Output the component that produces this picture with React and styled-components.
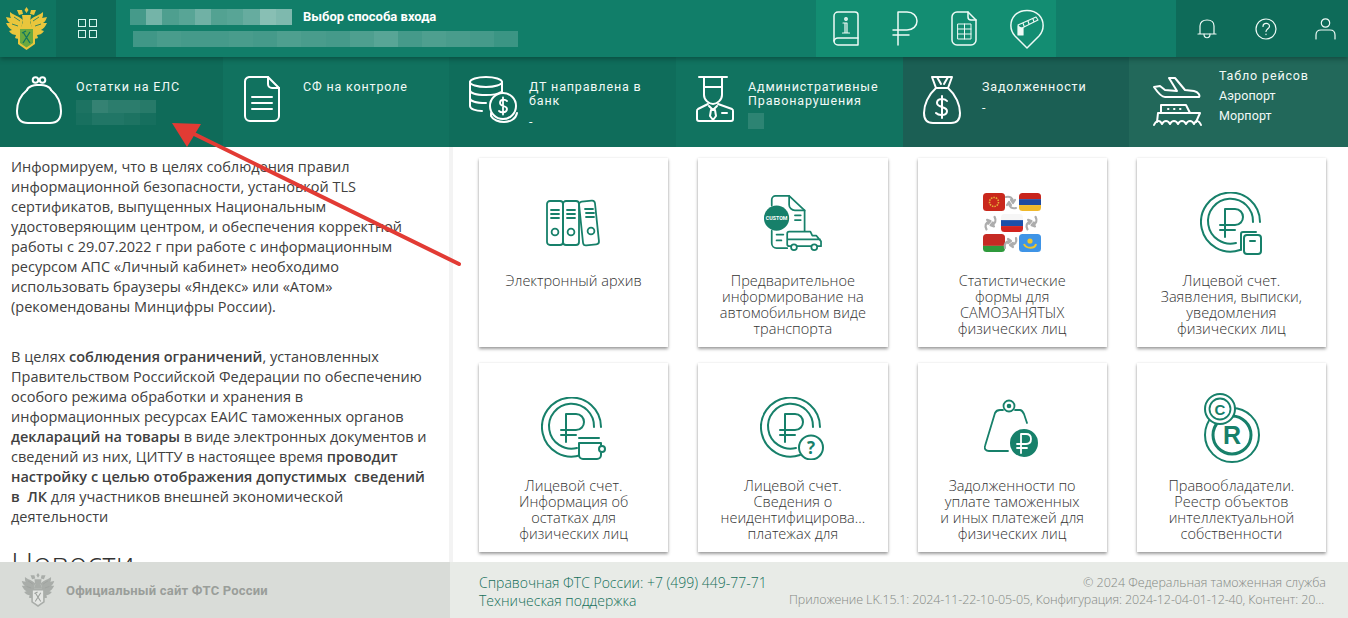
import React from "react";
import styled, { createGlobalStyle } from "styled-components";

const GlobalStyle = createGlobalStyle`
  html, body { margin: 0; padding: 0; height: 100%; overflow: hidden; background: #fff; }
  body { font-family: "Open Sans", "Liberation Sans", sans-serif; color: #444; }
  * { box-sizing: border-box; }
`;

/* ---------- shell ---------- */
const Page = styled.div`
  position: relative;
  width: 1348px;
  height: 618px;
  display: flex;
  flex-direction: column;
  overflow: hidden;
`;

const Header = styled.header`
  height: 57px;
  flex: none;
  display: flex;
  background: #117e69;
  color: #fff;
  position: relative;
  z-index: 2;
  box-shadow: 0 2px 5px rgba(0, 40, 30, 0.45);
`;

const LogoCell = styled.div`
  width: 56px;
  flex: none;
  display: flex;
  align-items: center;
  justify-content: flex-start;
  padding-left: 5px;
  background: #0f7561;
`;

const MenuCell = styled.div`
  width: 60px;
  flex: none;
  display: flex;
  align-items: center;
  justify-content: center;
  background: #0e6b59;
  padding-left: 2px;
`;

const MenuGrid = styled.div`
  display: grid;
  grid-template-columns: 8px 8px;
  gap: 3px;
`;

const MenuDot = styled.span`
  height: 8px;
  border: 1px solid #d8f5ee;
`;

const HeaderInfo = styled.div`
  flex: 1;
  padding: 9px 0 0 14px;
  display: flex;
  flex-direction: column;
  gap: 6px;
`;

const InfoRow = styled.div`
  display: flex;
  align-items: center;
  gap: 11px;
  height: 16px;
  padding-left: ${(p) => p.$indent || 0}px;
`;

const LoginLink = styled.span`
  font-family: Roboto, sans-serif;
  font-size: 13px;
  font-weight: 700;
  line-height: 16px;
`;

const Mosaic = styled.div`
  display: grid;
  grid-template-columns: repeat(${(p) => p.$cols}, 1fr);
  width: ${(p) => p.$w}px;
  height: ${(p) => p.$h}px;
  flex: none;
`;

const MosaicCell = styled.span`
  background: rgba(255, 255, 255, ${(p) => p.$a});
`;

const QuickGroup = styled.nav`
  width: 240px;
  flex: none;
  margin-right: 120px;
  display: flex;
  align-items: center;
  padding-left: 17px;
  gap: 33px;
  background: #138d72;
`;

const UserGroup = styled.div`
  width: 172px;
  flex: none;
  display: flex;
  align-items: center;
  padding-left: 21px;
  gap: 38px;
  background: #0e6b59;
`;

/* ---------- tiles ---------- */
const TileRow = styled.div`
  height: 90px;
  flex: none;
  display: grid;
  grid-template-columns: 223px 226px 227px 227px 226px 219px;
`;

const Tile = styled.a`
  display: flex;
  align-items: flex-start;
  background: ${(p) => p.$bg};
  color: #f2faf7;
  padding-top: ${(p) => (p.$high ? 12 : 23)}px;
  font-family: Roboto, sans-serif;
  font-size: 12.5px;
  line-height: 14px;
  letter-spacing: 0.85px;
`;

const TileIcon = styled.div`
  width: ${(p) => p.$w}px;
  flex: none;
  height: 50px;
  margin-top: ${(p) => (p.$high ? 8 : -5)}px;
  padding-left: ${(p) => p.$pad}px;
`;

const TileBody = styled.div`
  display: flex;
  flex-direction: column;
`;

const TileValue = styled.div`
  margin-top: ${(p) => p.$gap}px;
`;

const TileLink = styled.div`
  margin-top: 6px;
  letter-spacing: 0.1px;
`;

/* ---------- content ---------- */
const Content = styled.div`
  flex: 1;
  min-height: 0;
  display: flex;
  overflow: hidden;
`;

const NewsColumn = styled.section`
  width: 453px;
  flex: none;
  padding: 10px 17px 0 11px;
  border-right: 4px solid #f3f3f3;
  font-size: 14.5px;
  line-height: 20px;
  color: #404040;
  overflow: hidden;
`;

const Paragraph = styled.p`
  margin: 0 0 30px;

  &:last-of-type {
    margin-bottom: 16px;
  }
`;

const Strong = styled.b`
  font-weight: 600;
`;

const NewsTitle = styled.h2`
  margin: 0;
  font-size: 31px;
  font-weight: 300;
  line-height: 40px;
  color: #333;
`;

const CardGrid = styled.main`
  flex: 1;
  padding: 11px 22px 0 26px;
  display: grid;
  grid-template-columns: repeat(4, 1fr);
  grid-auto-rows: 189px;
  gap: 16px 30px;
  overflow: hidden;
`;

const Card = styled.a`
  display: flex;
  flex-direction: column;
  align-items: center;
  background: #fff;
  box-shadow: 0 2px 3px rgba(0, 0, 0, 0.38), 0 0 2px rgba(0, 0, 0, 0.08);
  padding-top: 23px;
`;

const CardIcon = styled.div`
  height: 84px;
  margin-bottom: 8px;
  display: flex;
  align-items: center;
  justify-content: center;
  flex: none;
`;

const CardText = styled.div`
  text-align: center;
  font-size: 14.5px;
  font-weight: 300;
  line-height: 16px;
  color: #333;
  white-space: nowrap;
`;

/* ---------- footer ---------- */
const Footer = styled.footer`
  height: 56px;
  flex: none;
  display: flex;
  background: #e8ebe7;
  position: relative;
`;

const FooterLeft = styled.div`
  width: 450px;
  flex: none;
  display: flex;
  align-items: center;
  gap: 11px;
  padding-left: 21px;
  background: #d9dcd8;
  color: #9a9e9a;
  font-family: Roboto, sans-serif;
  font-size: 13px;
  font-weight: 700;
  letter-spacing: 0.2px;
`;

const FooterContacts = styled.div`
  padding: 12px 0 0 29px;
  flex: none;
  width: 336px;
  font-size: 14px;
  font-weight: 300;
  line-height: 18px;
  color: #146f5a;
`;

const FooterMeta = styled.div`
  flex: 1;
  min-width: 0;
  padding: 12px 22px 0 3px;
  text-align: right;
  font-size: 12.5px;
  font-weight: 300;
  line-height: 17px;
  color: #848884;
`;

const MetaLine = styled.div`
  white-space: nowrap;
  overflow: hidden;
  text-overflow: ellipsis;
  letter-spacing: ${(p) => (p.$tight ? "-0.12px" : "0")};
`;

const ArrowLayer = styled.svg`
  position: absolute;
  left: 0;
  top: 0;
  pointer-events: none;
  z-index: 5;
`;

/* ---------- icons ---------- */
const Line = styled.svg.attrs((p) => ({
  width: p.$w,
  height: p.$h,
  viewBox: `0 0 ${p.$vw || p.$w} ${p.$vh || p.$h}`,
  fill: "none",
  stroke: p.$c || "#fff",
  strokeWidth: p.$sw || 2,
  strokeLinecap: "round",
  strokeLinejoin: "round",
}))`
  display: block;
  flex: none;
`;

const GREEN = "#17806a";

const Emblem = ({ gold = "#e9c63c", shield = "#6aa93f", dark = "#0f7561", w = 43 }) => (
  <svg width={w} height={w} viewBox="0 0 43 43">
    {/* wings */}
    <path d="M18 13 C14 9 8 8 5 5 C5 8 5 10 6 11 L1 10 C2 13 3 15 5 16 L1 16 C3 20 5 22 7 23 L4 24 C6 27 9 28 11 28 L10 31 C12 32 13 32 14 31 L16 22 Z" fill={gold} />
    <path d="M25 13 C29 9 35 8 38 5 C38 8 38 10 37 11 L42 10 C41 13 40 15 38 16 L42 16 C40 20 38 22 36 23 L39 24 C37 27 34 28 32 28 L33 31 C31 32 30 32 29 31 L27 22 Z" fill={gold} />
    <path d="M9 10 L15 14 M34 10 L28 14 M7 17 L13 19 M36 17 L30 19" stroke={dark} strokeWidth="0.8" fill="none" />
    {/* heads and crown */}
    <path d="M21.5 0 L23.5 3 L21.5 6 L19.5 3 Z M12 3 L17 3 L18 7 L14 8 Z M31 3 L26 3 L25 7 L29 8 Z M17 8 L26 8 L25 15 L27 20 H16 L18 15 Z" fill={gold} />
    {/* shield */}
    <path d="M13 20 H30 V37 L21.5 43 L13 37 Z" fill={gold} />
    <path d="M15 22 H28 V36 L21.5 40.5 L15 36 Z" fill={shield} />
    <path d="M18 25 L25 36 M25 25 L18 36 M17 26 L21 24" stroke={dark} strokeWidth="1.3" fill="none" />
  </svg>
);

const Purse = () => (
  <Line $w={48} $h={50}>
    <path d="M12 15 C6 20 2 28 2 36 C2 44 6 48 13 48 H35 C42 48 46 44 46 36 C46 28 42 20 36 15" />
    <path d="M12 15 C13 11 20 10 22 10 H26 C28 10 35 11 36 15" />
    <circle cx="20.5" cy="5" r="2.8" />
    <circle cx="27.5" cy="5" r="2.8" />
  </Line>
);

const DocLines = () => (
  <Line $w={38} $h={48}>
    <path d="M6 2 H25 L36 13 V41 A5 5 0 0 1 31 46 H7 A5 5 0 0 1 2 41 V7 A5 5 0 0 1 6 2 Z" />
    <path d="M25 2 V9 A4 4 0 0 0 29 13 H36" />
    <path d="M9 22 H29 M9 28 H29 M9 34 H29" />
  </Line>
);

const Coins = () => (
  <Line $w={52} $h={48}>
    <ellipse cx="18" cy="7" rx="16" ry="5" />
    <path d="M2 7 V31 C2 34 8 36 14 36 M34 7 V18 M2 15 C2 18 8 20 18 20 C24 20 30 19 33 17 M2 23 C2 26 8 28 18 28" />
    <circle cx="35" cy="31" r="13" />
    <path d="M23 38 V41 C25 45 31 47 36 47 C42 47 48 44 49 38" />
    <path d="M39 26 C37 24 32 24 32 28 C32 32 39 30 39 34 C39 38 33 38 31 36 M35 22.5 V39.5" strokeWidth="1.8" />
  </Line>
);

const Officer = () => (
  <Line $w={40} $h={48}>
    <path d="M4 2 H32 M9 2 V12 M27 2 V12 M9 12 H27" />
    <path d="M9 12 V20 C9 25 14 29 18 29 C22 29 27 25 27 20 V12" />
    <path d="M13 29 L3 34 A2 2 0 0 0 2 36 V44 A2 2 0 0 0 4 46 H36 A2 2 0 0 0 38 44 V36 A2 2 0 0 0 37 34 L23 29" />
    <path d="M14 31 L18 35 L22 31 M16 35 H20 L21 41 L18 45 L15 41 Z M27 38 H32" />
  </Line>
);

const MoneyBag = () => (
  <Line $w={40} $h={50}>
    <path d="M10 2 H30 L26 13 H14 Z" />
    <path d="M15 2 L19 9 M26 2 L22 9" />
    <path d="M14 13 C6 20 2 30 2 38 C2 44 5 48 11 48 H29 C35 48 38 44 38 38 C38 30 34 20 26 13" />
    <path d="M25 26 C23 23 15 23 15 28 C15 33 25 31 25 36 C25 41 17 41 14 38 M20 21 V43" />
  </Line>
);

const PlaneShip = () => (
  <Line $w={50} $h={50}>
    <path d="M1 10 L7 9 L12 13 L24 14 L16 1 L22 1 L32 13 L41 14 C46 15 47 19 46 20 H12 C9 20 5 16 1 10 Z" />
    <path d="M8 36 V28 H33 L37 36 M5 36 H47 L43 45 M5 36 L4 45" />
    <path d="M15 32 H15.5 M21 32 H21.5 M27 32 H27.5" />
    <path d="M1 48 C3 43 7 43 9 47 C11 43 15 43 17 47 C19 43 23 43 25 47 C27 43 31 43 33 47 C35 43 39 43 41 47 C43 43 46 43 48 48" />
  </Line>
);

const BookInfo = () => (
  <Line $w={26} $h={35} $sw={1.5} $c="#eefaf6">
    <path d="M5 1 H22 A3 3 0 0 1 25 4 V34 H5 A4 4 0 0 1 1 30 V5 A4 4 0 0 1 5 1 Z" />
    <path d="M1 30 A4 4 0 0 1 5 27 H25" />
    <circle cx="13" cy="8" r="1.2" />
    <path d="M10 12 H14 V22 M12 12 V22 M9.5 22 H16.5" strokeWidth="1.2" />
  </Line>
);

const RubleMark = () => (
  <Line $w={26} $h={35} $sw={1.5} $c="#eefaf6">
    <path d="M6 34 V1 H15 C21 1 25 5 25 10 C25 15 21 19 15 19 H1 M1 24 H17" />
  </Line>
);

const SheetTable = () => (
  <Line $w={26} $h={35} $sw={1.5} $c="#eefaf6">
    <path d="M6 1 H17 L25 9 V29 A5 5 0 0 1 20 34 H6 A5 5 0 0 1 1 29 V6 A5 5 0 0 1 6 1 Z" />
    <path d="M17 1 V6 A3 3 0 0 0 20 9 H25" />
    <path d="M7 13 H20 V28 H7 Z M7 18 H20 M7 23 H20 M13.5 13 V28" strokeWidth="1" />
  </Line>
);

const BarrierPin = () => (
  <Line $w={34} $h={40} $sw={1.5} $c="#eefaf6">
    <path d="M17 39 L5 27 C-0.5 21 -0.5 12 5 6 C11 0 23 0 29 6 C34.5 12 34.5 21 29 27 Z" />
    <path d="M8 16 L26 8 L28 11 L10 20 Z M13 14 L14 17 M18 12 L19 15 M23 10 L24 13" strokeWidth="1.1" />
    <path d="M8 17 V26 H13 V19" fill="#eefaf6" strokeWidth="1.2" />
  </Line>
);

const Bell = () => (
  <Line $w={20} $h={20} $sw={1.2} $c="#eefaf6">
    <path d="M3 15 V7 C3 3 6 1 10 1 C14 1 17 3 17 7 V15 M1 15 H19" />
    <path d="M7 15 C7 20 13 20 13 15" />
  </Line>
);

const Help = () => (
  <svg width="22" height="22" viewBox="0 0 22 22" fill="none" stroke="#eefaf6" strokeWidth="1.2" strokeLinecap="round">
    <circle cx="11" cy="11" r="10" />
    <path d="M8 8.5 C8 4.5 14.5 4.5 14.5 8.2 C14.5 10.5 11 11 11 13.5 M11 16.2 V16.6" />
  </svg>
);

const User = () => (
  <Line $w={21} $h={22} $sw={1.2} $c="#eefaf6">
    <circle cx="10.5" cy="5" r="4.2" />
    <path d="M1 21 V17 C1 14 3 12 6 12 H15 C18 12 20 14 20 17 V21" />
  </Line>
);

const Archive = () => (
  <Line $w={56} $h={48} $c={GREEN} $sw={1.8}>
    <rect x="1" y="2" width="16" height="44" rx="3" />
    <rect x="17" y="2" width="16" height="44" rx="3" />
    <rect x="35" y="2" width="16" height="44" rx="3" transform="rotate(-6 43 24)" />
    <path d="M5 11 H13 M5 15 H13 M5 19 H13 M21 11 H29 M21 15 H29 M21 19 H29 M39 10 H47 M40 14 H48 M40 18 H48" />
    <circle cx="9" cy="33" r="3.4" />
    <circle cx="25" cy="33" r="3.4" />
    <circle cx="45" cy="32" r="3.4" />
  </Line>
);

const CustomBadge = styled.text`
  font-family: Roboto, sans-serif;
  font-size: 5.5px;
  font-weight: 700;
  fill: #fff;
  stroke: none;
`;

const CustomTruck = () => (
  <Line $w={58} $h={58} $vw={60} $vh={60} $c={GREEN} $sw={1.8}>
    <path d="M8 12 V6 A4 4 0 0 1 12 2 H26 L42 17 V38" />
    <path d="M26 2 V11 A6 6 0 0 0 32 17 H42" />
    <path d="M8 38 V51 A5 5 0 0 0 13 56 H24" />
    <circle cx="13" cy="25" r="13" fill={GREEN} stroke="none" />
    <CustomBadge x="13" y="27" textAnchor="middle">CUSTOM</CustomBadge>
    <path d="M32 22 H38 M32 27 H38 M13 42 H20 M13 48 H18" />
    <path d="M26 39 H48 L50 43 H54 L59 49 V54 H26 A2 2 0 0 1 24 52 V41 A2 2 0 0 1 26 39 Z M24 47 H58" />
    <circle cx="31" cy="55" r="3" fill="#fff" />
    <circle cx="52" cy="55" r="3" fill="#fff" />
  </Line>
);

const Flag = ({ x, y, w = 22, h = 18, stripes }) => {
  const clip = `flag-${x}-${y}`;
  let offset = y;
  return (
    <g>
      <clipPath id={clip}>
        <rect x={x} y={y} width={w} height={h} rx="3.5" />
      </clipPath>
      <g clipPath={`url(#${clip})`}>
        {stripes.map(([color, part]) => {
          const height = h * part;
          const el = <rect key={color} x={x} y={offset} width={w} height={height} fill={color} />;
          offset += height;
          return el;
        })}
      </g>
    </g>
  );
};

// pair of curved arrows chasing each other
const Swap = ({ x, y, turn }) => (
  <g transform={`translate(${x} ${y}) rotate(${turn})`} stroke="#adadad" strokeWidth="2.2" fill="none" strokeLinecap="round" strokeLinejoin="round">
    <path d="M-5 -5 C-1 -6 2 -4 2 0 M0 -2 L2 1 L4 -2" />
    <path d="M5 6 C1 7 -2 5 -2 1 M-4 3 L-2 0 L0 3" />
  </g>
);

const Flags = () => (
  <svg width="60" height="60" viewBox="0 0 60 60">
    <Flag x={1} y={0} stripes={[["#c9281c", 1]]} />
    <circle cx="12" cy="9" r="4.5" fill="none" stroke="#e8b23a" strokeWidth="1.6" strokeDasharray="1.5 1" />
    <Flag x={37} y={0} stripes={[["#c8241c", 0.34], ["#1f4aa0", 0.33], ["#f0b92c", 0.33]]} />
    <Flag x={19} y={21} stripes={[["#f6f6f6", 0.34], ["#1c4fa8", 0.33], ["#d2231f", 0.33]]} />
    <Flag x={1} y={41} stripes={[["#c62a24", 0.66], ["#2f9a3c", 0.34]]} />
    <Flag x={37} y={41} stripes={[["#3f94e6", 1]]} />
    <path d="M42 51 C44 56 53 56 54 51" stroke="#f0c52c" strokeWidth="2" fill="none" />
    <circle cx="48" cy="48" r="2.6" fill="#f0c52c" />
    <Swap x={29} y={9} turn={0} />
    <Swap x={9} y={30} turn={75} />
    <Swap x={50} y={30} turn={75} />
    <Swap x={29} y={50} turn={90} />
  </svg>
);

const RubleCoin = ({ children, extra = 0 }) => (
  <Line $w={62 + extra} $h={63} $c={GREEN} $sw={2}>
    <path d="M40 58 A29.5 29.5 0 1 1 60 30" />
    <path d="M36 51 A22.5 22.5 0 1 1 53 30" />
    <path d="M25 45 V17 H35 C40 17 43 21 43 25 C43 29 40 33 35 33 H20 M20 38 H35" />
    {children}
  </Line>
);

const CoinBook = () => (
  <RubleCoin>
    <path d="M41 58 V42 A2 2 0 0 1 43 40 H56" fill="none" />
    <rect x="44" y="43" width="17" height="19" rx="3" fill="#fff" />
    <path d="M50 49 H55" />
  </RubleCoin>
);

const CoinWallet = () => (
  <RubleCoin extra={4}>
    <path d="M38 46 V58 A4 4 0 0 0 42 62 H56 A4 4 0 0 0 60 58 V56 M38 46 H60 V48 M38 41 H58" fill="#fff" />
    <circle cx="61" cy="52" r="3" fill="#fff" />
  </RubleCoin>
);

const QuestionText = styled.text`
  font-family: "Open Sans", sans-serif;
  font-size: 17px;
  font-weight: 700;
  fill: ${GREEN};
  stroke: none;
`;

const CoinQuestion = () => (
  <RubleCoin extra={4}>
    <circle cx="51" cy="50.5" r="12" fill="#fff" />
    <QuestionText x="51" y="56.5" textAnchor="middle">?</QuestionText>
  </RubleCoin>
);

const DebtWeight = () => (
  <Line $w={56} $h={58} $c={GREEN} $sw={1.8}>
    <circle cx="25" cy="7" r="5.5" />
    <circle cx="25" cy="7" r="1.4" fill={GREEN} />
    <path d="M19 11 H16 C14 11 12 12 11 14 L1 47 C0 50 2 52 5 52 H24" />
    <path d="M31 11 H36 C38 11 39 13 40 15 L43 24" />
    <circle cx="40" cy="44" r="14" fill={GREEN} stroke="none" />
    <path d="M37 54 V35 H42 C46 35 47 38 47 40 C47 43 45 45 42 45 H33 M33 49 H43" stroke="#fff" />
  </Line>
);

const BrandText = styled.text`
  font-family: "Liberation Sans", Arial, sans-serif;
  font-weight: 700;
  fill: ${GREEN};
  stroke: none;
  font-size: ${(p) => p.$size}px;
`;

const BrandMarks = () => (
  <Line $w={58} $h={70} $c={GREEN} $sw={2}>
    <circle cx="30" cy="42" r="27" />
    <circle cx="30" cy="42" r="19" strokeWidth="3" />
    <BrandText $size={25} x="30" y="51" textAnchor="middle">R</BrandText>
    <circle cx="18" cy="16" r="15" fill="#fff" />
    <circle cx="18" cy="16" r="10.5" strokeWidth="1.8" />
    <BrandText $size={15} x="18" y="21.5" textAnchor="middle">C</BrandText>
  </Line>
);

/* ---------- data ---------- */
const cards = [
  { icon: <Archive />, lines: ["Электронный архив"] },
  { icon: <CustomTruck />, lines: ["Предварительное", "информирование на", "автомобильном виде", "транспорта"] },
  { icon: <Flags />, lines: ["Статистические", "формы для", "САМОЗАНЯТЫХ", "физических лиц"] },
  { icon: <CoinBook />, lines: ["Лицевой счет.", "Заявления, выписки,", "уведомления", "физических лиц"] },
  { icon: <CoinWallet />, lines: ["Лицевой счет.", "Информация об", "остатках для", "физических лиц"] },
  { icon: <CoinQuestion />, lines: ["Лицевой счет.", "Сведения о", "неидентифицирова...", "платежах для"] },
  { icon: <DebtWeight />, lines: ["Задолженности по", "уплате таможенных", "и иных платежей для", "физических лиц"] },
  { icon: <BrandMarks />, lines: ["Правообладатели.", "Реестр объектов", "интеллектуальной", "собственности"] },
];

const blurName = [0.22, 0.42, 0.26, 0.3, 0.4, 0.28, 0.3, 0.36, 0.5, 0.46];
const blurOrg = [0.2, 0.24, 0.22, 0.22, 0.24, 0.22, 0.26, 0.24, 0.22, 0.26, 0.3, 0.22, 0.26, 0.24, 0.22, 0.18];
const blurBalance = [0.06, 0.16, 0.12, 0.12, 0.1, 0.04, 0.08, 0.08, 0.06, 0.03];

const Blur = ({ cells, w, h, cols }) => (
  <Mosaic $w={w} $h={h} $cols={cols}>
    {cells.map((a, i) => (
      <MosaicCell key={i} $a={a} />
    ))}
  </Mosaic>
);

export default function App() {
  return (
    <Page>
      <GlobalStyle />
      <Header>
        <LogoCell>
          <Emblem />
        </LogoCell>
        <MenuCell>
          <MenuGrid>
            <MenuDot />
            <MenuDot />
            <MenuDot />
            <MenuDot />
          </MenuGrid>
        </MenuCell>
        <HeaderInfo>
          <InfoRow>
            <Blur cells={blurName} w={162} h={16} cols={10} />
            <LoginLink>Выбор способа входа</LoginLink>
          </InfoRow>
          <InfoRow $indent={3}>
            <Blur cells={blurOrg} w={385} h={16} cols={16} />
          </InfoRow>
        </HeaderInfo>
        <QuickGroup>
          <BookInfo />
          <RubleMark />
          <SheetTable />
          <BarrierPin />
        </QuickGroup>
        <UserGroup>
          <Bell />
          <Help />
          <User />
        </UserGroup>
      </Header>

      <TileRow>
        <Tile $bg="#0f6b59">
          <TileIcon $w={76} $pad={15}>
            <Purse />
          </TileIcon>
          <TileBody>
            Остатки на ЕЛС
            <TileValue $gap={6}>
              <Blur cells={blurBalance} w={80} h={25} cols={5} />
            </TileValue>
          </TileBody>
        </Tile>
        <Tile $bg="#11725f">
          <TileIcon $w={80} $pad={20}>
            <DocLines />
          </TileIcon>
          <TileBody>СФ на контроле</TileBody>
        </Tile>
        <Tile $bg="#0f6d5b">
          <TileIcon $w={80} $pad={19}>
            <Coins />
          </TileIcon>
          <TileBody>
            <span>ДТ направлена в<br />банк</span>
            <TileValue $gap={7}>-</TileValue>
          </TileBody>
        </Tile>
        <Tile $bg="#117360">
          <TileIcon $w={72} $pad={19}>
            <Officer />
          </TileIcon>
          <TileBody>
            <span>Административные<br />Правонарушения</span>
            <TileValue $gap={5}>
              <Blur cells={[0.12]} w={16} h={16} cols={1} />
            </TileValue>
          </TileBody>
        </Tile>
        <Tile $bg="#1b5f54">
          <TileIcon $w={79} $pad={19}>
            <MoneyBag />
          </TileIcon>
          <TileBody>
            Задолженности
            <TileValue $gap={7}>-</TileValue>
          </TileBody>
        </Tile>
        <Tile $bg="#22685a" $high>
          <TileIcon $w={90} $pad={24} $high>
            <PlaneShip />
          </TileIcon>
          <TileBody>
            Табло рейсов
            <TileLink>Аэропорт</TileLink>
            <TileLink>Морпорт</TileLink>
          </TileBody>
        </Tile>
      </TileRow>

      <Content>
        <NewsColumn>
          <Paragraph>
            Информируем, что в целях соблюдения правил информационной безопасности, установкой TLS
            сертификатов, выпущенных Национальным удостоверяющим центром, и обеспечения корректной
            работы с 29.07.2022 г при работе с информационным ресурсом АПС «Личный кабинет» необходимо
            использовать браузеры «Яндекс» или «Атом» (рекомендованы Минцифры России).
          </Paragraph>
          <Paragraph>
            В целях <Strong>соблюдения ограничений</Strong>, установленных Правительством Российской Федерации по
            обеспечению особого режима обработки и хранения в информационных ресурсах ЕАИС таможенных
            органов <Strong>деклараций на товары</Strong> в виде электронных документов и сведений из них, ЦИТТУ в
            настоящее время <Strong>проводит настройку с целью отображения допустимых&nbsp; сведений в&nbsp; ЛК</Strong> для
            участников внешней экономической деятельности
          </Paragraph>
          <NewsTitle>Новости</NewsTitle>
        </NewsColumn>
        <CardGrid>
          {cards.map((card) => (
            <Card key={card.lines.join()}>
              <CardIcon>{card.icon}</CardIcon>
              <CardText>
                {card.lines.map((line) => (
                  <div key={line}>{line}</div>
                ))}
              </CardText>
            </Card>
          ))}
        </CardGrid>
      </Content>

      <Footer>
        <FooterLeft>
          <Emblem w={34} gold="#a9ada9" shield="#e4e6e3" dark="#9a9e9a" />
          Официальный сайт ФТС России
        </FooterLeft>
        <FooterContacts>
          <div>Справочная ФТС России: +7 (499) 449-77-71</div>
          <div>Техническая поддержка</div>
        </FooterContacts>
        <FooterMeta>
          <MetaLine>© 2024 Федеральная таможенная служба</MetaLine>
          <MetaLine $tight>Приложение LK.15.1: 2024-11-22-10-05-05, Конфигурация: 2024-12-04-01-12-40, Контент: 2024-12-04</MetaLine>
        </FooterMeta>
      </Footer>

      <ArrowLayer width="1348" height="618" viewBox="0 0 1348 618">
        <path d="M459 264 L190 132" stroke="#e23b34" strokeWidth="4" strokeLinecap="round" fill="none" />
        <path d="M172 123 L201 124 L187 147 Z" fill="#e23b34" />
      </ArrowLayer>
    </Page>
  );
}
